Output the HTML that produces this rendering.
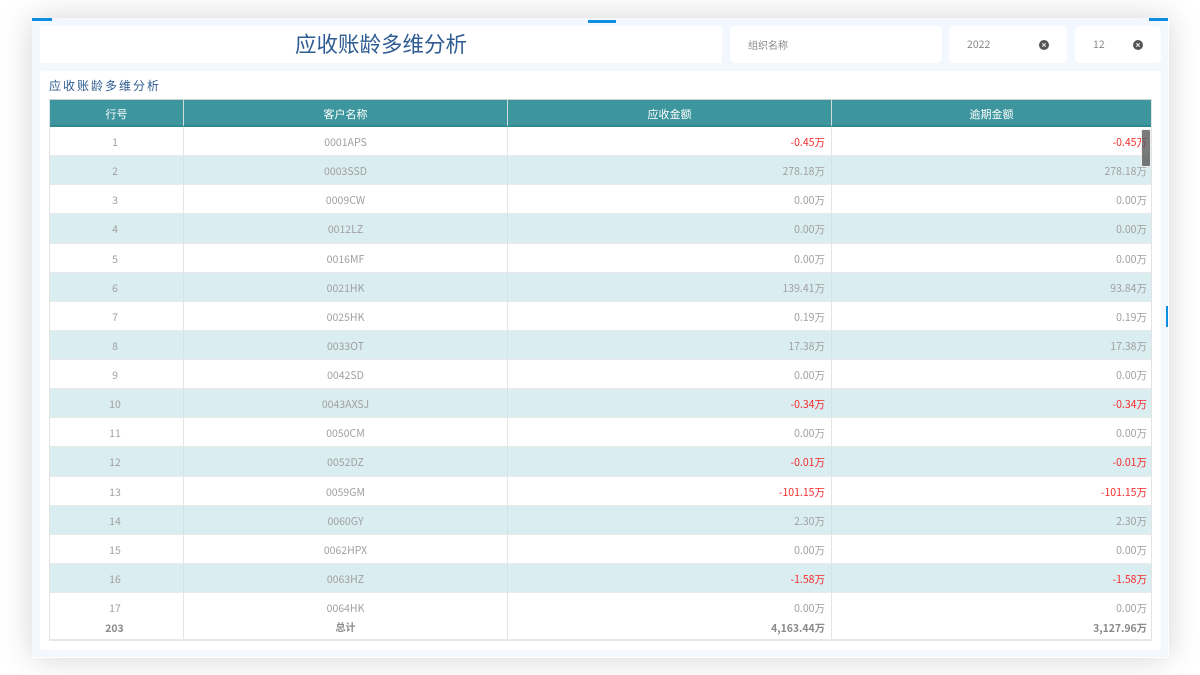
<!DOCTYPE html>
<html><head><meta charset="utf-8">
<style>
*{box-sizing:border-box;margin:0;padding:0}
html,body{width:1200px;height:675px;overflow:hidden;background:#fff;font-family:"Noto Sans CJK SC","Liberation Sans",sans-serif}
#wrap{position:absolute;left:0;top:0;width:1200px;height:675px;background:#fff;filter:blur(.3px)}
.a{position:absolute}
#frame{left:32px;top:18px;width:1137px;height:640px;background:#f3f7fe;box-shadow:0 0 30px rgba(0,0,0,.17);border-right:1px solid #fff;border-bottom:1px solid #fff}
.p{position:absolute;background:#fff}
.mark{position:absolute;background:#0d8ee0}
.lbl{position:absolute;font-size:10px;color:#888;line-height:14px}
.x{position:absolute;width:10px;height:10px;border-radius:50%;background:#555}
.x svg{display:block}
#tb{position:absolute;left:49px;top:99px;width:1103px;height:542px;overflow:hidden;border:1px solid #e2e4e4;border-top:0;border-bottom:2px solid #e6e8e8;background:#fff}
table{border-collapse:separate;border-spacing:0;table-layout:fixed;width:1101px;position:absolute;left:0;top:0}
th{height:28px;background:#3d959d;color:#fff;font-size:11px;font-weight:normal;border-right:1px solid #cfdcdd;border-bottom:2px solid #2f8a90;border-top:1px solid #c9d3d3;padding:2px 0 0;line-height:14px}
td{height:29.13px;font-size:10.5px;line-height:14px;color:#a0a0a0;text-align:center;border-right:1px solid #e4e6e6;border-bottom:1px solid #e8eaea;padding:4px 0 0;overflow:hidden;white-space:nowrap}
tbody tr:nth-child(even) td{background:#daedf1;border-right-color:#d6e3e6}
td:first-child{padding-right:3px}
td.r{text-align:right;padding-right:6px}
td.n{color:#f52a2a}
td:last-child,th:last-child{border-right:0}
td:last-child.r{padding-right:4px}
#ft{position:absolute;left:0;top:520px;width:1101px;height:20px;font-size:10.4px;font-weight:bold;color:#8a8a8a;line-height:16px;background:#fff}
#ft div{position:absolute;top:.5px}
#ft div.l{top:0;height:20px;width:1px;background:#e4e6e6}
#sb{position:absolute;left:1141px;top:129px;width:10px;height:38px;background:rgba(85,85,85,.78);border:1px solid #eee;border-radius:2px}
</style></head><body>
<div id="wrap">
<div class="a" id="frame"></div>
<div class="mark" style="left:32px;top:18px;width:20px;height:2.5px"></div>
<div class="mark" style="left:588px;top:20px;width:28px;height:3px"></div>
<div class="mark" style="left:1149px;top:18px;width:19px;height:2.5px"></div>
<div class="mark" style="left:1166px;top:306px;width:2px;height:21px"></div>

<div class="p" style="left:40px;top:26px;width:682px;height:37px"></div>
<div class="a" style="left:40px;top:26px;width:682px;height:37px;text-align:center;font-size:21.5px;line-height:36px;color:#2f5c93">应收账龄多维分析</div>
<div class="p" style="left:730px;top:26px;width:212px;height:37px;border-radius:5px"></div>
<div class="lbl" style="left:748px;top:38px">组织名称</div>
<div class="p" style="left:949px;top:26px;width:118px;height:37px;border-radius:5px"></div>
<div class="lbl" style="left:967px;top:38px;font-size:10.5px">2022</div>
<div class="x" style="left:1039px;top:40px"><svg width="10" height="10"><path d="M3.3 3.3L6.7 6.7M6.7 3.3L3.3 6.7" stroke="#ddd" stroke-width="1.2"/></svg></div>
<div class="p" style="left:1075px;top:26px;width:86px;height:37px;border-radius:5px"></div>
<div class="lbl" style="left:1093px;top:38px;font-size:10.5px">12</div>
<div class="x" style="left:1133px;top:40px"><svg width="10" height="10"><path d="M3.3 3.3L6.7 6.7M6.7 3.3L3.3 6.7" stroke="#ddd" stroke-width="1.2"/></svg></div>

<div class="p" style="left:40px;top:71px;width:1121px;height:579px;border-radius:3px"></div>
<div class="a" style="left:49px;top:78px;font-size:12px;line-height:16px;color:#2f5c93;letter-spacing:2px">应收账龄多维分析</div>

<div id="tb">
<table>
<colgroup><col style="width:134px"><col style="width:324px"><col style="width:324px"><col style="width:319px"></colgroup>
<thead><tr><th>行号</th><th>客户名称</th><th>应收金额</th><th>逾期金额</th></tr></thead>
<tbody>
<tr><td>1</td><td>0001APS</td><td class="r n">-0.45万</td><td class="r n">-0.45万</td></tr>
<tr><td>2</td><td>0003SSD</td><td class="r">278.18万</td><td class="r">278.18万</td></tr>
<tr><td>3</td><td>0009CW</td><td class="r">0.00万</td><td class="r">0.00万</td></tr>
<tr><td>4</td><td>0012LZ</td><td class="r">0.00万</td><td class="r">0.00万</td></tr>
<tr><td>5</td><td>0016MF</td><td class="r">0.00万</td><td class="r">0.00万</td></tr>
<tr><td>6</td><td>0021HK</td><td class="r">139.41万</td><td class="r">93.84万</td></tr>
<tr><td>7</td><td>0025HK</td><td class="r">0.19万</td><td class="r">0.19万</td></tr>
<tr><td>8</td><td>0033OT</td><td class="r">17.38万</td><td class="r">17.38万</td></tr>
<tr><td>9</td><td>0042SD</td><td class="r">0.00万</td><td class="r">0.00万</td></tr>
<tr><td>10</td><td>0043AXSJ</td><td class="r n">-0.34万</td><td class="r n">-0.34万</td></tr>
<tr><td>11</td><td>0050CM</td><td class="r">0.00万</td><td class="r">0.00万</td></tr>
<tr><td>12</td><td>0052DZ</td><td class="r n">-0.01万</td><td class="r n">-0.01万</td></tr>
<tr><td>13</td><td>0059GM</td><td class="r n">-101.15万</td><td class="r n">-101.15万</td></tr>
<tr><td>14</td><td>0060GY</td><td class="r">2.30万</td><td class="r">2.30万</td></tr>
<tr><td>15</td><td>0062HPX</td><td class="r">0.00万</td><td class="r">0.00万</td></tr>
<tr><td>16</td><td>0063HZ</td><td class="r n">-1.58万</td><td class="r n">-1.58万</td></tr>
<tr><td>17</td><td>0064HK</td><td class="r">0.00万</td><td class="r">0.00万</td></tr>
</tbody>
</table>
<div id="ft">
<div style="left:0;width:129px;text-align:center">203</div>
<div style="left:134px;width:323px;text-align:center;font-size:10px;top:0">总计</div>
<div style="left:458px;width:317px;text-align:right">4,163.44万</div>
<div style="left:782px;width:315px;text-align:right">3,127.96万</div>
<div class="l" style="left:133px"></div>
<div class="l" style="left:457px"></div>
<div class="l" style="left:781px"></div>
</div>
</div>
<div id="sb"></div>
</div>
</body></html>
